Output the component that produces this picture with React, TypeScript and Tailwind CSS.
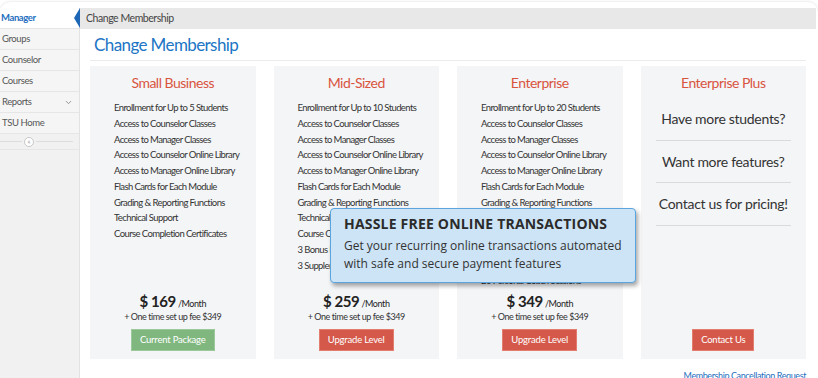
import { ChevronDown } from "lucide-react";

const base = [
  "Access to Counselor Classes",
  "Access to Manager Classes",
  "Access to Counselor Online Library",
  "Access to Manager Online Library",
  "Flash Cards for Each Module",
  "Grading & Reporting Functions",
  "Technical Support",
  "Course Completion Certificates",
];

const plans = [
  {
    name: "Small Business",
    features: ["Enrollment for Up to 5 Students", ...base],
    price: "169",
    button: "Current Package",
    current: true,
  },
  {
    name: "Mid-Sized",
    features: ["Enrollment for Up to 10 Students", ...base, "3 Bonus Modules", "3 Supplemental Modules"],
    price: "259",
    button: "Upgrade Level",
  },
  {
    name: "Enterprise",
    features: [
      "Enrollment for Up to 20 Students",
      ...base,
      "5 Bonus Modules",
      "5 Supplemental Modules",
      "20 Personal Coach Sessions",
    ],
    price: "349",
    button: "Upgrade Level",
  },
];

const menu = ["Groups", "Counselor", "Courses", "Reports", "TSU Home"];

function Sidebar() {
  return (
    <aside className="w-[80px] shrink-0 bg-[#f1f1f1] border-r border-[#e2e2e2] flex flex-col">
      <div className="relative h-[21px] bg-white flex items-center border-b border-[#e6e6e6]">
        <span className="text-[9.5px] font-bold text-[#1f6fc0] tracking-[-0.4px] pl-[1px]">Manager</span>
        <span className="absolute right-[-1px] top-[0px] w-0 h-0 border-y-[10px] border-y-transparent border-r-[6px] border-r-[#1d65b5]" />
      </div>
      {menu.map((m) => (
        <div
          key={m}
          className="h-[21px] flex items-center justify-between border-b border-[#e6e6e6] bg-[#f5f5f5] pl-[2px] pr-[6px]"
        >
          <span className="text-[9.5px] text-[#555] tracking-[-0.4px]">{m}</span>
          {m === "Reports" && <ChevronDown className="w-[9px] h-[9px] text-[#777]" strokeWidth={2} />}
        </div>
      ))}
      <div className="h-[16px] flex items-center gap-[2px] pr-[6px] border-b border-[#e6e6e6]">
        <div className="w-[22px] h-px bg-[#dcdcdc]" />
        <div className="w-[10px] h-[10px] rounded-full border border-[#c8c8c8] bg-white flex items-center justify-center text-[7px] leading-none text-[#999]">
          «
        </div>
        <div className="flex-1 h-px bg-[#dcdcdc]" />
      </div>
    </aside>
  );
}

function PlanCard({ plan }: { plan: (typeof plans)[number] }) {
  return (
    <div className="bg-[#f4f5f7] flex flex-col h-[293px] pb-[8px]">
      <h3 className="text-center text-[14px] text-[#d9543f] tracking-[-0.5px] mt-[8px] leading-[18px]">{plan.name}</h3>
      <ul className="mt-[8px] pl-[24px] flex flex-col">
        {plan.features.map((f) => (
          <li key={f} className="text-[9.5px] leading-[15.75px] text-[#333] tracking-[-0.6px]">
            {f}
          </li>
        ))}
      </ul>
      <div className="mt-auto flex flex-col items-center">
        <div className="text-[#222] leading-[14px]">
          <span className="text-[15px] font-bold tracking-[-0.4px]">$ {plan.price}</span>
          <span className="text-[9px] tracking-[-0.4px] ml-[2px]">/Month</span>
        </div>
        <div className="text-[9px] text-[#333] tracking-[-0.45px] leading-[11px]">+ One time set up fee $349</div>
        <button
          className={`mt-[7px] h-[22px] px-[8px] text-[9.5px] text-white tracking-[-0.2px] border ${
            plan.current ? "bg-[#80b77f] border-[#9cc99b]" : "bg-[#d4594a] border-[#e27d70]"
          }`}
        >
          {plan.button}
        </button>
      </div>
    </div>
  );
}

function PlusCard() {
  const qs = ["Have more students?", "Want more features?", "Contact us for pricing!"];
  return (
    <div className="bg-[#f4f5f7] flex flex-col h-[293px] pb-[8px]">
      <h3 className="text-center text-[14px] text-[#d9543f] tracking-[-0.5px] mt-[8px] leading-[18px]">
        Enterprise Plus
      </h3>
      <div className="mx-[15px] mt-[6px] flex flex-col">
        {qs.map((q) => (
          <div
            key={q}
            className="h-[42.5px] flex items-center justify-center border-b border-[#dadada] text-[14px] text-[#333] tracking-[-0.3px]"
          >
            {q}
          </div>
        ))}
      </div>
      <div className="mt-auto flex justify-center">
        <button className="h-[22px] px-[8px] text-[9.5px] text-white tracking-[-0.2px] bg-[#d4594a] border border-[#e27d70]">
          Contact Us
        </button>
      </div>
    </div>
  );
}

export default function App() {
  return (
    <div className="relative w-[818px] h-[378px] overflow-hidden bg-white font-['Lato',sans-serif]">
      <div className="absolute inset-x-0 top-[2px] bottom-[-10px] rounded-[10px] shadow-[0_0_3px_rgba(0,0,0,0.15)] pointer-events-none" />
      <div className="flex h-full pt-[8px]">
        <Sidebar />
        <main className="flex-1 flex flex-col">
          <div className="h-[21px] shrink-0 mr-[2px] bg-[#e8e8e8] flex items-center pl-[6px] text-[10.5px] text-[#444] tracking-[-0.45px]">
            Change Membership
          </div>
          <div className="pl-[10px] pr-[12px]">
            <h1 className="text-[17px] text-[#2075c5] tracking-[-0.6px] leading-[22px] mt-[5px] pl-[4px] pb-[4px] border-b border-[#ececec]">
              Change Membership
            </h1>
            <div className="grid grid-cols-4 gap-[18px] mt-[5px]">
              {plans.map((p) => (
                <PlanCard key={p.name} plan={p} />
              ))}
              <PlusCard />
            </div>
            <div className="flex justify-end mt-[10px]">
              <a className="text-[9px] text-[#1f6fc0] tracking-[-0.4px]">Membership Cancellation Request</a>
            </div>
          </div>
        </main>
      </div>

      <div className="absolute left-[330px] top-[208px] w-[306px] h-[75px] bg-[#cde4f6] border border-[#5aa5df] rounded-[4px] shadow-[2px_3px_4px_rgba(0,0,0,0.35)] px-[13px] pt-[4px] font-['Open_Sans',sans-serif]">
        <div className="text-[14px] font-bold text-[#2b2b2b] leading-[22px] tracking-[0.2px]">
          HASSLE FREE ONLINE TRANSACTIONS
        </div>
        <div className="text-[12px] text-[#333] leading-[17.5px] mt-[2px]">
          Get your recurring online transactions automated with safe and secure payment features
        </div>
      </div>
    </div>
  );
}
